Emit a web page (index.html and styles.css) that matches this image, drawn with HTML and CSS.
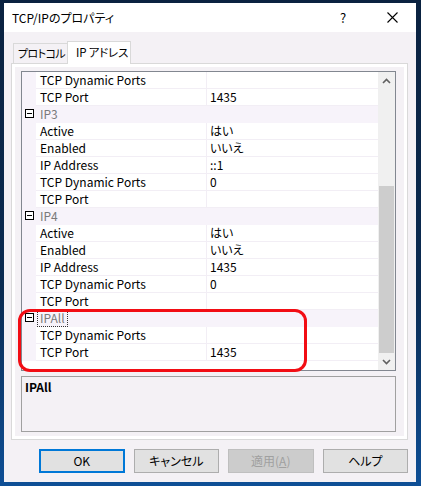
FILE: index.html
```html
<!DOCTYPE html>
<html lang="ja">
<head>
<meta charset="utf-8">
<title>TCP/IPのプロパティ</title>
<link rel="stylesheet" href="styles.css">
</head>
<body>
<div class="window">
  <div class="titlebar">
    <span class="title">TCP/IPのプロパティ</span>
    <span class="help">?</span>
    <span class="close">
      <svg width="11" height="11" viewBox="0 0 11 11"><path d="M0.5 0.5 L10.5 10.5 M10.5 0.5 L0.5 10.5" stroke="#000" stroke-width="1.1" fill="none"/></svg>
    </span>
  </div>
  <div class="client">
    <div class="tabs">
      <div class="tab">プロトコル</div>
      <div class="tab active">IP アドレス</div>
    </div>
    <div class="panel">
      <div class="grid">
        <div class="rows">
          <div class="row"><span class="gut"></span><span class="name">TCP Dynamic Ports</span><span class="val"></span></div>
          <div class="row"><span class="gut"></span><span class="name">TCP Port</span><span class="val">1435</span></div>
          <div class="cat"><span class="gut"><i class="minus"></i></span><span class="cname">IP3</span></div>
          <div class="row"><span class="gut"></span><span class="name">Active</span><span class="val">はい</span></div>
          <div class="row"><span class="gut"></span><span class="name">Enabled</span><span class="val">いいえ</span></div>
          <div class="row"><span class="gut"></span><span class="name">IP Address</span><span class="val">::1</span></div>
          <div class="row"><span class="gut"></span><span class="name">TCP Dynamic Ports</span><span class="val">0</span></div>
          <div class="row"><span class="gut"></span><span class="name">TCP Port</span><span class="val"></span></div>
          <div class="cat"><span class="gut"><i class="minus"></i></span><span class="cname">IP4</span></div>
          <div class="row"><span class="gut"></span><span class="name">Active</span><span class="val">はい</span></div>
          <div class="row"><span class="gut"></span><span class="name">Enabled</span><span class="val">いいえ</span></div>
          <div class="row"><span class="gut"></span><span class="name">IP Address</span><span class="val">1435</span></div>
          <div class="row"><span class="gut"></span><span class="name">TCP Dynamic Ports</span><span class="val">0</span></div>
          <div class="row"><span class="gut"></span><span class="name">TCP Port</span><span class="val"></span></div>
          <div class="cat"><span class="gut"><i class="minus"></i></span><span class="cname focus">IPAll</span></div>
          <div class="row"><span class="gut"></span><span class="name">TCP Dynamic Ports</span><span class="val"></span></div>
          <div class="row"><span class="gut"></span><span class="name">TCP Port</span><span class="val">1435</span></div>
        </div>
        <div class="scrollbar">
          <div class="sbtn"><svg width="9" height="6" viewBox="0 0 9 6"><path d="M1 5 L4.5 1.5 L8 5" stroke="#606060" stroke-width="1.6" fill="none"/></svg></div>
          <div class="track"><div class="thumb"></div></div>
          <div class="sbtn"><svg width="9" height="6" viewBox="0 0 9 6"><path d="M1 1 L4.5 4.5 L8 1" stroke="#606060" stroke-width="1.6" fill="none"/></svg></div>
        </div>
        <div class="highlight"></div>
      </div>
      <div class="desc">IPAll</div>
    </div>
    <div class="buttons">
      <button class="btn default">OK</button>
      <button class="btn">キャンセル</button>
      <button class="btn disabled">適用(<u>A</u>)</button>
      <button class="btn">ヘルプ</button>
    </div>
  </div>
</div>
</body>
</html>
```
FILE: styles.css
```css
* { box-sizing: border-box; }
html, body { margin: 0; padding: 0; }
body {
  width: 421px;
  height: 486px;
  overflow: hidden;
  background: linear-gradient(180deg, #0a2240 0%, #0b2b52 60%, #0e4f96 100%);
  font-family: "Noto Sans CJK JP", sans-serif;
  font-feature-settings: "palt";
  font-size: 12px;
  color: #000;
}
.window {
  margin: 3px 0 0 4px;
  width: 412px;
  height: 479px;
  background: #f4f1f5;
  display: flex;
  flex-direction: column;
}
.titlebar {
  height: 29px;
  background: #fff;
  display: flex;
  align-items: center;
  padding-left: 8px;
}
.title { flex: 1; font-size: 12px; line-height: 16px; }
.help { width: 12px; font-size: 13px; line-height: 16px; margin-right: 35px; }
.close { width: 11px; height: 11px; margin-right: 18px; display: flex; }
.client {
  flex: 1;
  padding: 9px 8px 0 7px;
  display: flex;
  flex-direction: column;
}
.tabs {
  display: flex;
  align-items: flex-end;
  padding-left: 2px;
  height: 22px;
  position: relative;
  z-index: 1;
}
.tab {
  height: 20px;
  border: 1px solid #d9d9d9;
  border-bottom: none;
  padding: 0 0 0 4px;
  line-height: 18px;
  background: #f4f1f5;
  width: 55px;
  white-space: nowrap;
  font-size: 11px;
  letter-spacing: -0.6px;
  overflow: hidden;
}
.tab.active {
  height: 23px;
  margin-bottom: -1px;
  background: #fff;
  width: 64px;
  margin-left: -1px;
  padding-left: 8px;
  line-height: 20px;
  font-size: 11.5px;
  letter-spacing: -0.2px;
}
.panel {
  height: 377px;
  border: 1px solid #d9d9d9;
  box-shadow: inset 0 0 0 3px #fff;
  padding: 7px 11px 0 9px;
}
.grid {
  position: relative;
  height: 300px;
  border: 1px solid #828790;
  display: flex;
  background: #fff;
}
.rows { width: 356px; display: flex; flex-direction: column; }
.row, .cat {
  height: 17px;
  display: flex;
  line-height: 16px;
}
.row .gut, .cat .gut {
  width: 14px;
  background: #f7f3fa;
  flex: none;
  position: relative;
}
.row .name {
  width: 171px;
  padding-left: 4px;
  border-right: 1px solid #f2eef5;
  border-bottom: 1px solid #f2eef5;
  white-space: nowrap;
}
.row .val {
  flex: 1;
  padding-left: 3px;
  border-bottom: 1px solid #f2eef5;
}
.cat { background: #f7f3fa; }
.cname { color: #7a7a7a; padding-left: 4px; line-height: 16px; }
.cname.focus {
  margin-left: 2px;
  padding: 0 2px;
  margin-top: 1px;
  height: 15px;
  line-height: 14px;
  outline: 1px dotted #333;
  outline-offset: 0;
}
.minus {
  position: absolute;
  left: 3px;
  top: 3px;
  width: 9px;
  height: 9px;
  border: 1px solid #000;
  background: #fff;
}
.minus::after {
  content: "";
  position: absolute;
  left: 1px;
  top: 3px;
  width: 5px;
  height: 1px;
  background: #000;
}
.scrollbar {
  width: 17px;
  display: flex;
  flex-direction: column;
  background: #f0f0f0;
}
.sbtn {
  height: 17px;
  display: flex;
  align-items: center;
  justify-content: center;
}
.track {
  flex: 1;
  display: flex;
  flex-direction: column;
  justify-content: flex-end;
}
.thumb {
  height: 167px;
  margin: 0 1px;
  background: #cdcdcd;
}
.highlight {
  position: absolute;
  left: -4px;
  top: 237px;
  width: 289px;
  height: 63px;
  border: 3px solid #f20d14;
  border-radius: 12px;
}
.desc {
  margin-top: 5px;
  height: 56px;
  border: 1px solid #a0a0a0;
  font-weight: bold;
  padding: 2px 3px;
  line-height: 16px;
}
.buttons {
  display: flex;
  gap: 9px;
  padding-left: 28px;
  margin-top: 9px;
}
.btn {
  width: 86px;
  height: 24px;
  border: 1px solid #adadad;
  background: #e1e1e1;
  font-family: "Noto Sans CJK JP", sans-serif;
  font-feature-settings: "palt";
  font-size: 12px;
  color: #000;
  padding: 0;
  line-height: 20px;
}
.btn.default { border: 2px solid #0078d7; }
.btn.disabled { background: #cccccc; border-color: #bfbfbf; color: #a0a0a0; }
```
